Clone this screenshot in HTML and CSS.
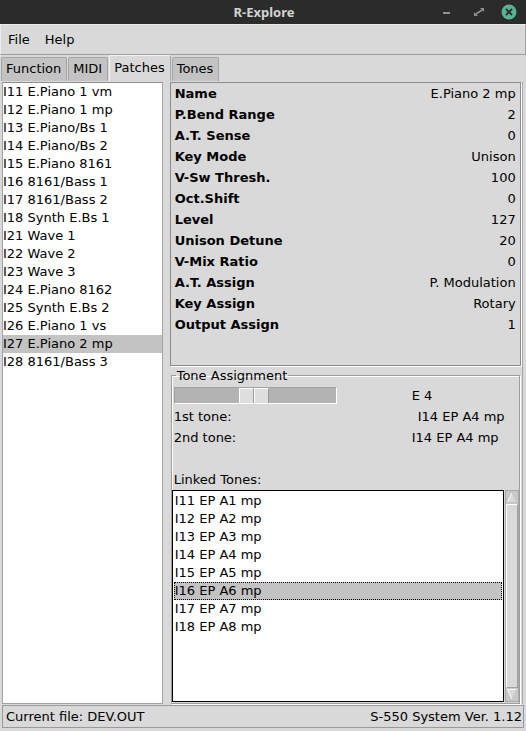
FILE: index.html
```html
<!DOCTYPE html>
<html>
<head>
<meta charset="utf-8">
<link rel="stylesheet" href="styles.css">
</head>
<body>
<div class="window">
  <div class="titlebar">
    <div></div>
    <div class="title">R-Explore</div>
    <div class="controls">
      <svg class="ctl" width="14" height="14" viewBox="0 0 14 14"><rect x="1" y="7" width="7" height="2" fill="#8f8f8f"/></svg>
      <svg class="ctl" width="14" height="14" viewBox="0 0 14 14"><path d="M8 3h4v4zM6 11H2V7z" fill="#8f8f8f"/><path d="M10 5L4 9" stroke="#8f8f8f" stroke-width="1.6"/></svg>
      <svg class="ctl close" width="16" height="16" viewBox="0 0 16 16"><circle cx="8" cy="8" r="7.5" fill="#55b496"/><path d="M5.5 5.5l5 5M10.5 5.5l-5 5" stroke="#2b2b2b" stroke-width="1.8" stroke-linecap="round"/></svg>
    </div>
  </div>
  <div class="menubar">
    <span class="menu">File</span>
    <span class="menu">Help</span>
  </div>
  <div class="tabs">
    <div class="tab">Function</div>
    <div class="tab">MIDI</div>
    <div class="tab active">Patches</div>
    <div class="tab">Tones</div>
  </div>
  <div class="main">
    <div class="patchlist">
      <div class="item">I11 E.Piano 1 vm</div>
      <div class="item">I12 E.Piano 1 mp</div>
      <div class="item">I13 E.Piano/Bs 1</div>
      <div class="item">I14 E.Piano/Bs 2</div>
      <div class="item">I15 E.Piano 8161</div>
      <div class="item">I16 8161/Bass 1</div>
      <div class="item">I17 8161/Bass 2</div>
      <div class="item">I18 Synth E.Bs 1</div>
      <div class="item">I21 Wave 1</div>
      <div class="item">I22 Wave 2</div>
      <div class="item">I23 Wave 3</div>
      <div class="item">I24 E.Piano 8162</div>
      <div class="item">I25 Synth E.Bs 2</div>
      <div class="item">I26 E.Piano 1 vs</div>
      <div class="item sel">I27 E.Piano 2 mp</div>
      <div class="item">I28 8161/Bass 3</div>
    </div>
    <div class="right">
      <div class="params">
        <div class="prow"><span class="pl">Name</span><span>E.Piano 2 mp</span></div>
        <div class="prow"><span class="pl">P.Bend Range</span><span>2</span></div>
        <div class="prow"><span class="pl">A.T. Sense</span><span>0</span></div>
        <div class="prow"><span class="pl">Key Mode</span><span>Unison</span></div>
        <div class="prow"><span class="pl">V-Sw Thresh.</span><span>100</span></div>
        <div class="prow"><span class="pl">Oct.Shift</span><span>0</span></div>
        <div class="prow"><span class="pl">Level</span><span>127</span></div>
        <div class="prow"><span class="pl">Unison Detune</span><span>20</span></div>
        <div class="prow"><span class="pl">V-Mix Ratio</span><span>0</span></div>
        <div class="prow"><span class="pl">A.T. Assign</span><span>P. Modulation</span></div>
        <div class="prow"><span class="pl">Key Assign</span><span>Rotary</span></div>
        <div class="prow"><span class="pl">Output Assign</span><span>1</span></div>
      </div>
      <fieldset class="tones">
        <legend>Tone Assignment</legend>
        <div class="sliderrow">
          <div class="trough"><div class="thumb"><span></span><span></span></div></div>
          <span class="note">E 4</span>
        </div>
        <div class="trow"><span class="tl">1st tone:</span><span class="tv1">I14 EP A4 mp</span></div>
        <div class="trow"><span class="tl">2nd tone:</span><span class="tv2">I14 EP A4 mp</span></div>
        <div class="trow"></div>
        <div class="trow"><span class="tl">Linked Tones:</span></div>
        <div class="linked">
          <div class="lbox">
            <div class="litem">I11 EP A1 mp</div>
            <div class="litem">I12 EP A2 mp</div>
            <div class="litem">I13 EP A3 mp</div>
            <div class="litem">I14 EP A4 mp</div>
            <div class="litem">I15 EP A5 mp</div>
            <div class="litem lsel">I16 EP A6 mp</div>
            <div class="litem">I17 EP A7 mp</div>
            <div class="litem">I18 EP A8 mp</div>
          </div>
          <div class="scrollbar">
            <div class="arrow"><svg width="13" height="13" viewBox="0 0 13 13"><path d="M6.5 1.5L11.5 12H1.5Z" fill="#d9d9d9" stroke="#ffffff" stroke-width="1"/><path d="M6.5 1.5L11.5 12H1.5" fill="none" stroke="#a8a8a8" stroke-width="0.8"/></svg></div>
            <div class="sthumb"></div>
            <div class="arrow"><svg width="13" height="13" viewBox="0 0 13 13"><path d="M6.5 11.5L11.5 1H1.5Z" fill="#d9d9d9" stroke="#ffffff" stroke-width="1"/><path d="M6.5 11.5L11.5 1" fill="none" stroke="#a8a8a8" stroke-width="0.8"/></svg></div>
          </div>
        </div>
      </fieldset>
    </div>
    <div class="edge"></div>
  </div>
  <div class="statusbar">
    <div class="status">
      <span>Current file: DEV.OUT</span>
      <span>S-550 System Ver. 1.12</span>
    </div>
  </div>
</div>
</body>
</html>
```

FILE: styles.css
```css
* { box-sizing: border-box; }
html, body { margin: 0; padding: 0; }
body {
  width: 526px;
  height: 731px;
  overflow: hidden;
  background: #d9d9d9;
  font-family: "DejaVu Sans", sans-serif;
  font-size: 13px;
  color: #000;
}
.window {
  width: 526px;
  height: 731px;
  display: flex;
  flex-direction: column;
  background: #d9d9d9;
}
.titlebar {
  height: 24px;
  flex: none;
  background: #2b2b2b;
  display: grid;
  grid-template-columns: 1fr auto 1fr;
  align-items: center;
}
.title {
  font-family: "Noto Sans", sans-serif;
  font-weight: bold;
  font-size: 13px;
  color: #d3d3d3;
  padding-left: 2px;
}
.controls {
  justify-self: end;
  display: flex;
  align-items: center;
  gap: 16px;
  padding-right: 9px;
}
.ctl { display: block; }
.close { margin-left: -1px; }
.menubar {
  height: 31px;
  flex: none;
  display: flex;
  align-items: center;
  padding-left: 7px;
  gap: 15px;
  border-top: 1px solid #ececec;
  border-left: 1px solid #ececec;
  border-bottom: 1px solid #9e9e9e;
  border-right: 1px solid #9e9e9e;
}
.menu { line-height: 16px; padding-top: 1px; }
.tabs {
  height: 26px;
  flex: none;
  display: flex;
  align-items: flex-end;
  padding-left: 1px;
  gap: 1px;
}
.tab {
  height: 24px;
  padding: 0 5px 0 4px;
  background: #c3c3c3;
  border: 1px solid #a5a5a5;
  border-bottom: none;
  border-radius: 2px 2px 0 0;
  line-height: 22px;
}
.tab.active {
  height: 26px;
  background: #d9d9d9;
  line-height: 24px;
  border-top-color: #f3f3f3;
  border-left-color: #f3f3f3;
}
.main {
  flex: 1;
  display: flex;
  min-height: 0;
  padding-top: 1px;
}
.patchlist {
  width: 161px;
  margin-left: 2px;
  height: 622px;
  background: #fff;
  border: 1px solid #a3a3a3;
  border-top-color: #8e8e8e;
}
.item {
  height: 18px;
  line-height: 18px;
  white-space: nowrap;
}
.sel { background: #c3c3c3; }
.right {
  width: 352px;
  margin-left: 7px;
  display: flex;
  flex-direction: column;
}
.params {
  width: 351px;
  height: 284px;
  flex: none;
  border: 1px solid #8c8c8c;
  box-shadow: 1px 1px 0 #ffffff;
  padding: 0 4px;
}
.prow {
  height: 21px;
  display: flex;
  justify-content: space-between;
  align-items: center;
}
.pl { font-weight: bold; }
.tones {
  margin: 2px 0 0 1px;
  width: 349px;
  height: 336px;
  padding: 0;
  border: 1px solid #9c9c9c;
  box-shadow: inset 1px 1px 0 #ffffff, 1px 1px 0 #ffffff;
  min-width: 0;
}
.tones legend {
  padding: 0 1px;
  margin-left: 4px;
  line-height: 15px;
}
.sliderrow {
  display: flex;
  align-items: center;
  height: 17px;
  margin-top: 4px;
  margin-bottom: 2px;
  padding-left: 2px;
}
.trough {
  width: 163px;
  height: 17px;
  background: #b3b3b3;
  border-right: 1px solid #ffffff;
  border-bottom: 1px solid #ffffff;
  border-top: 1px solid #a3a3a3;
  border-left: 1px solid #a3a3a3;
  padding-left: 64px;
  display: flex;
}
.thumb {
  width: 30px;
  height: 15px;
  display: flex;
}
.thumb span {
  flex: 1;
  background: #dedede;
  border-top: 1px solid #fff;
  border-left: 1px solid #fff;
  border-right: 1px solid #9a9a9a;
}
.note { margin-left: 75px; }
.trow {
  height: 21px;
  display: flex;
  align-items: center;
  padding-left: 2px;
}
.tl { width: 238px; flex: none; }
.tv1 { margin-left: 6px; }
.tv2 { margin-left: 0; }
.linked {
  display: flex;
  height: 212px;
}
.lbox {
  width: 333px;
  height: 212px;
  background: #fff;
  border: 1px solid #000;
  padding: 1px 1px;
}
.litem {
  height: 18px;
  line-height: 18px;
  padding-left: 1px;
  white-space: nowrap;
}
.lsel {
  background: #c3c3c3;
  outline: 1px dotted #000;
  outline-offset: -1px;
}
.scrollbar {
  width: 14px;
  height: 212px;
  margin-left: 1px;
  display: flex;
  flex-direction: column;
  border: 1px solid #a8a8a8;
  background: #c8c8c8;
}
.arrow {
  height: 13px;
  flex: none;
  display: flex;
  justify-content: center;
}
.sthumb {
  flex: 1;
  background: #d9d9d9;
  border-left: 1px solid #ffffff;
  border-top: 1px solid #ffffff;
  border-right: 1px solid #a0a0a0;
  border-bottom: 1px solid #a0a0a0;
}
.edge {
  width: 4px;
  height: 622px;
  border-left: 1px solid #a8a8a8;
  margin-left: 1px;
}
.statusbar {
  height: 27px;
  flex: none;
  padding: 1px 2px 3px 2px;
}
.status {
  height: 23px;
  display: flex;
  justify-content: space-between;
  align-items: center;
  padding: 0 1px 0 3px;
  border: 1px solid #9a9a9a;
}
```
